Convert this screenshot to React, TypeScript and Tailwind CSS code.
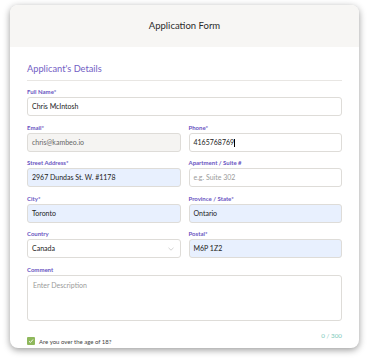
import React from "react";

const Label = ({ children }: { children: React.ReactNode }) => (
  <div className="text-[6px] leading-[7px] font-bold text-[#6a55c2] mb-[2px]">{children}</div>
);

const Field = ({
  label,
  value,
  placeholder,
  bg = "bg-white",
  textColor = "text-[#222]",
  cursor = false,
  chevron = false,
}: {
  label: string;
  value?: string;
  placeholder?: string;
  bg?: string;
  textColor?: string;
  cursor?: boolean;
  chevron?: boolean;
}) => (
  <div className="flex flex-col">
    <Label>{label}</Label>
    <div
      className={`h-[19px] rounded-[3px] border border-[#dedcd8] ${bg} flex items-center px-[4px] text-[7px]`}
    >
      {value ? (
        <span className={textColor}>
          {value}
          {cursor && <span className="inline-block w-[0.6px] h-[8px] bg-black align-middle" />}
        </span>
      ) : (
        <span className="text-[#9a9a9a]">{placeholder}</span>
      )}
      {chevron && (
        <svg className="ml-auto mr-[2px]" width="6" height="4" viewBox="0 0 6 4">
          <path d="M0.5 0.8 L3 3.2 L5.5 0.8" fill="none" stroke="#b5b5b5" strokeWidth="0.6" />
        </svg>
      )}
    </div>
  </div>
);

export default function App() {
  return (
    <div className="w-[370px] h-[363px] bg-white font-['Lato',sans-serif] overflow-hidden pt-[5px] pl-[10px]">
      <div className="w-[349px] h-[343px] rounded-[8px] bg-white shadow-[0_2px_7px_rgba(0,0,0,0.4)] overflow-hidden flex flex-col">
        <div className="h-[42px] shrink-0 bg-[#f7f6f4] flex items-center justify-center pt-[1px] text-[9.5px] text-[#2b2b2b]">
          Application Form
        </div>
        <div className="px-[17px] pt-[16px] flex flex-col">
          <div className="text-[9.25px] leading-[12px] text-[#7360c4] pb-[5px] border-b border-[#e8e6e3]">
            Applicant's Details
          </div>
          <div className="mt-[7px] flex flex-col gap-[7.5px]">
            <Field label="Full Name*" value="Chris McIntosh" />
            <div className="grid grid-cols-2 gap-x-[8px] gap-y-[7.5px]">
              <Field label="Email*" value="chris@kambeo.io" bg="bg-[#f5f4f2]" textColor="text-[#666]" />
              <Field label="Phone*" value="4165768769" cursor />
              <Field label="Street Address*" value="2967 Dundas St. W. #1178" bg="bg-[#e8f0fe]" />
              <Field label="Apartment / Suite #" placeholder="e.g. Suite 302" />
              <Field label="City*" value="Toronto" bg="bg-[#e8f0fe]" />
              <Field label="Province / State*" value="Ontario" bg="bg-[#e8f0fe]" />
              <Field label="Country" value="Canada" chevron />
              <Field label="Postal*" value="M6P 1Z2" bg="bg-[#e8f0fe]" />
            </div>
            <div className="flex flex-col">
              <Label>Comment</Label>
              <div className="h-[46px] rounded-[3px] border border-[#dedcd8] px-[5px] pt-[4px] text-[7px] text-[#9a9a9a]">
                Enter Description
              </div>
            </div>
          </div>
          <div className="flex justify-end mt-[11px] text-[6.3px] leading-[7px] text-[#7ec9bb]">0 / 300</div>
          <div className="flex items-center gap-[4px] -mt-[2px]">
            <div className="w-[8px] h-[8px] rounded-[1px] bg-[#8fb85c] flex items-center justify-center">
              <svg width="6" height="6" viewBox="0 0 6 6">
                <path d="M1 3.2 L2.4 4.5 L5 1.5" fill="none" stroke="white" strokeWidth="0.9" />
              </svg>
            </div>
            <span className="text-[6px] text-[#444]">Are you over the age of 18?</span>
          </div>
        </div>
      </div>
    </div>
  );
}
